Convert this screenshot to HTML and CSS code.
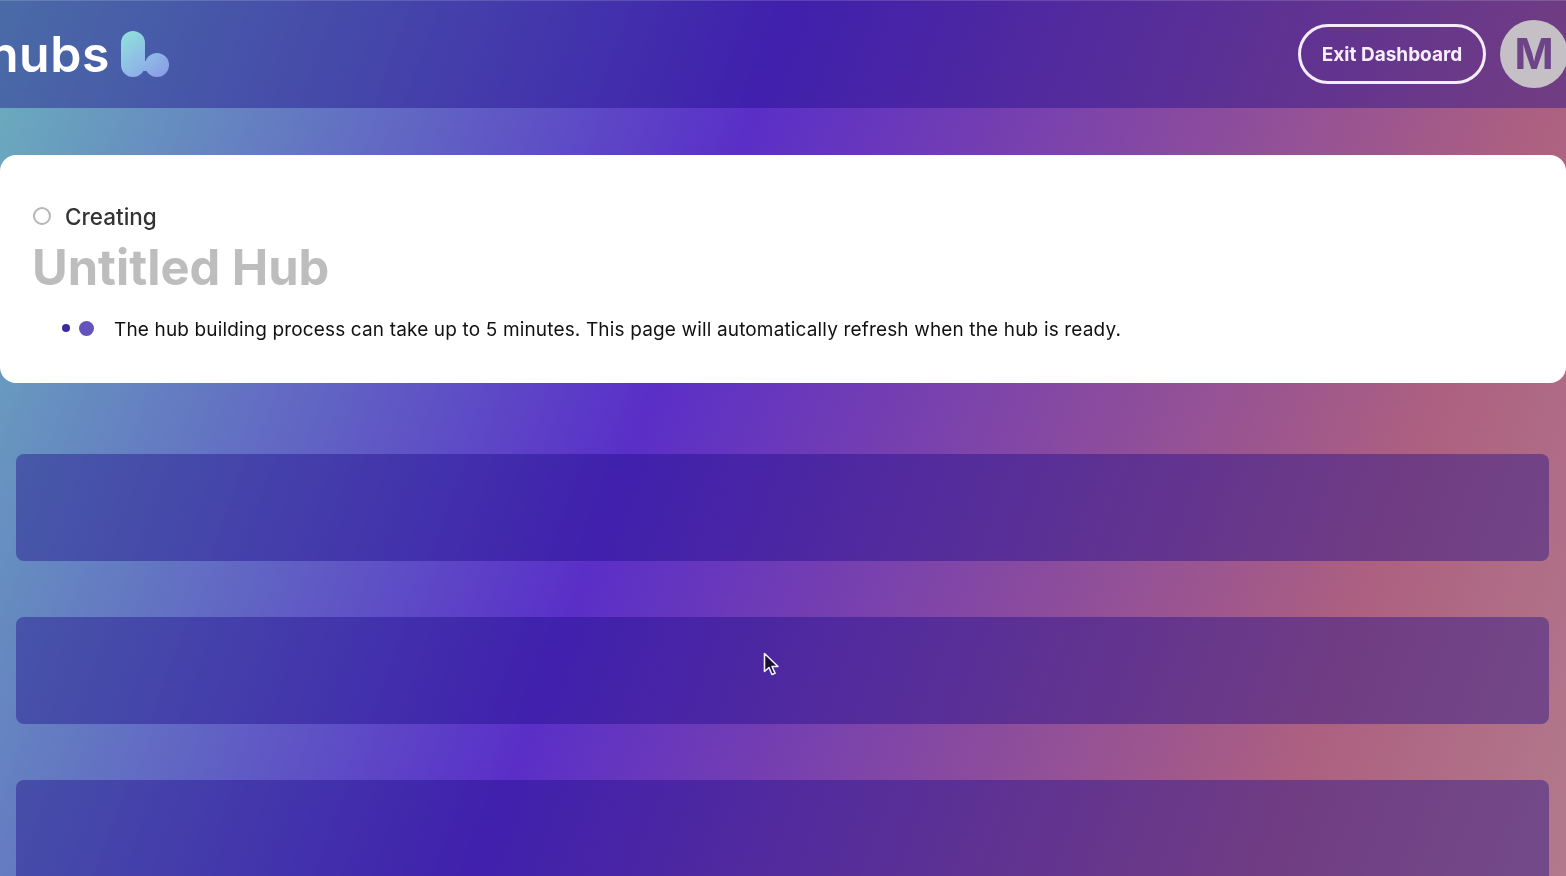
FILE: index.html
```html
<!DOCTYPE html>
<html lang="en">
<head>
<meta charset="utf-8">
<title>Untitled Hub</title>
<link rel="stylesheet" href="styles.css">
</head>
<body>
<div class="page">
  <header class="topbar">
    <div class="brand">
      <span class="brand-name">hubs</span>
      <svg class="brand-mark" width="48" height="46" viewBox="0 0 48 46" aria-hidden="true">
        <defs>
          <linearGradient id="markFill" gradientUnits="userSpaceOnUse" x1="4" y1="2" x2="40" y2="46">
            <stop offset="0" stop-color="#8fdfda"/>
            <stop offset="0.55" stop-color="#8fbbe6"/>
            <stop offset="1" stop-color="#8a9fe6"/>
          </linearGradient>
        </defs>
        <rect fill="url(#markFill)" x="0" y="0" width="24" height="46" rx="12"/>
        <rect fill="url(#markFill)" x="20" y="30" width="12" height="10"/>
        <circle fill="url(#markFill)" cx="36" cy="34" r="12"/>
      </svg>
    </div>
    <div class="actions">
      <a class="exit-btn">Exit Dashboard</a>
      <div class="avatar">M</div>
    </div>
  </header>

  <section class="status-card">
    <div class="status-row">
      <span class="status-ring"></span>
      <span class="status-label">Creating</span>
    </div>
    <h1 class="hub-title">Untitled Hub</h1>
    <div class="notice">
      <span class="dots"><span class="dot-small"></span><span class="dot-large"></span></span>
      <p class="notice-text">The hub building process can take up to 5 minutes. This page will automatically refresh when the hub is ready.</p>
    </div>
  </section>

  <div class="placeholders">
    <div class="placeholder"></div>
    <div class="placeholder"></div>
    <div class="placeholder"></div>
  </div>

  <svg class="cursor" width="18" height="26" viewBox="0 0 18 26" aria-hidden="true">
    <path d="M1.500 1.500v18l4.500-4 3 7 3-1.300-3-6.700h6z" fill="#1a1030" stroke="#f2eefc" stroke-width="1.600" stroke-linejoin="round"/>
  </svg>
</div>
</body>
</html>
```

FILE: styles.css
```css
* {
  box-sizing: border-box;
}

html,
body {
  margin: 0;
  height: 100%;
}

body {
  overflow: hidden;
  font-family: Inter, "Liberation Sans", sans-serif;
}

.page {
  position: relative;
  height: 876px;
  overflow: hidden;
  background: linear-gradient(110deg, #6bb0bd 0%, #5a2fc8 42%, #ad6080 84%, #b27a8c 100%);
}

.topbar {
  height: 108px;
  display: flex;
  align-items: center;
  justify-content: space-between;
  background: rgba(28, 12, 135, 0.42);
  box-shadow: inset 0 1px 0 rgba(255, 255, 255, 0.15);
}

.brand,
.actions,
.status-row,
.hub-title,
.notice,
.cursor {
  filter: blur(0.5px);
}

.brand {
  display: flex;
  align-items: center;
  gap: 11px;
  margin-left: -12px;
}

.brand-name {
  font-size: 50px;
  font-weight: 600;
  line-height: 1;
  color: #fff;
  letter-spacing: 0.5px;
  margin-top: -1px;
}

.brand-mark {
  flex: none;
  margin-top: -1px;
}

.actions {
  display: flex;
  align-items: center;
  gap: 14px;
  margin-right: -2px;
  margin-bottom: 1px;
}

.exit-btn {
  display: flex;
  align-items: center;
  justify-content: center;
  width: 188px;
  height: 60px;
  padding-top: 2px;
  border: 3px solid #f4ecfa;
  border-radius: 30px;
  color: #f6effb;
  font-size: 19px;
  font-weight: 700;
}

.avatar {
  display: flex;
  align-items: center;
  justify-content: center;
  width: 68px;
  height: 68px;
  border-radius: 50%;
  background: #c4c0c6;
  color: #6e4488;
  font-size: 42px;
  font-weight: 700;
}

.status-card {
  margin-top: 47px;
  height: 228px;
  padding: 50px 33px 0;
  background: #fff;
  border-radius: 16px;
}

.status-row {
  display: flex;
  align-items: center;
  gap: 14px;
  height: 22px;
}

.status-ring {
  width: 18px;
  height: 18px;
  border: 2px solid #b5b5b5;
  border-radius: 50%;
}

.status-label {
  font-size: 22.5px;
  font-weight: 500;
  color: #333;
}

.hub-title {
  margin: 13px 0 0 -1px;
  font-size: 48.8px;
  line-height: 56px;
  font-weight: 700;
  color: #bdbdbd;
}

.notice {
  display: flex;
  align-items: center;
  margin: 21px 0 0 29px;
  height: 24px;
}

.dots {
  display: flex;
  align-items: center;
  gap: 9px;
  width: 52px;
  flex: none;
  margin-bottom: 2px;
}

.dot-small {
  width: 8px;
  height: 8px;
  border-radius: 50%;
  background: #3d2a9e;
}

.dot-large {
  width: 15px;
  height: 15px;
  border-radius: 50%;
  background: #6553bd;
}

.notice-text {
  margin: 0;
  font-size: 19px;
  letter-spacing: 0.15px;
  color: #111;
  white-space: nowrap;
}

.placeholders {
  display: flex;
  flex-direction: column;
  gap: 56px;
  margin: 71px 17px 0 16px;
}

.placeholder {
  flex: none;
  height: 107px;
  border-radius: 8px;
  background: rgba(28, 12, 135, 0.42);
}

.cursor {
  position: absolute;
  left: 763px;
  top: 652px;
}
```
